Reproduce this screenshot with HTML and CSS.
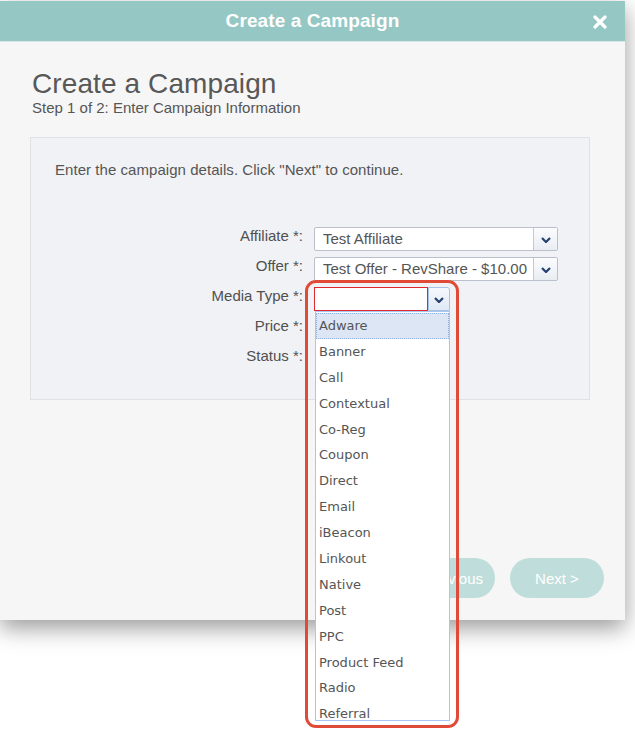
FILE: index.html
```html
<!DOCTYPE html>
<html>
<head>
<meta charset="utf-8">
<link rel="stylesheet" href="styles.css">
</head>
<body>
<div class="modal">
  <div class="modal-header">
    <span class="header-title">Create a Campaign</span>
    <span class="close">
      <svg width="14" height="14" viewBox="0 0 14 14"><path d="M2 2 L12 12 M12 2 L2 12" stroke="#fff" stroke-width="3.2" stroke-linecap="round"/></svg>
    </span>
  </div>
  <div class="modal-body">
    <h1 class="title">Create a Campaign</h1>
    <div class="subtitle">Step 1 of 2: Enter Campaign Information</div>
    <div class="panel">
      <p class="intro">Enter the campaign details. Click "Next" to continue.</p>
      <div class="form">
        <label class="lbl">Affiliate *:</label>
        <div class="select wide"><span class="value">Test Affiliate</span><span class="arrow"><svg width="10" height="6" viewBox="0 0 10 6"><path d="M1 1 L5 5 L9 1" fill="none" stroke="#26416f" stroke-width="2.2"/></svg></span></div>
        <label class="lbl">Offer *:</label>
        <div class="select wide"><span class="value">Test Offer - RevShare - $10.00</span><span class="arrow"><svg width="10" height="6" viewBox="0 0 10 6"><path d="M1 1 L5 5 L9 1" fill="none" stroke="#26416f" stroke-width="2.2"/></svg></span></div>
        <label class="lbl">Media Type *:</label>
        <div class="media">
          <div class="select open"><span class="value invalid"></span><span class="arrow focus"><svg width="10" height="6" viewBox="0 0 10 6"><path d="M1 1 L5 5 L9 1" fill="none" stroke="#26416f" stroke-width="2.2"/></svg></span></div>
          <ul class="options">
            <li class="active">Adware</li>
            <li>Banner</li>
            <li>Call</li>
            <li>Contextual</li>
            <li>Co-Reg</li>
            <li>Coupon</li>
            <li>Direct</li>
            <li>Email</li>
            <li>iBeacon</li>
            <li>Linkout</li>
            <li>Native</li>
            <li>Post</li>
            <li>PPC</li>
            <li>Product Feed</li>
            <li>Radio</li>
            <li>Referral</li>
          </ul>
          <div class="highlight"></div>
        </div>
        <label class="lbl">Price *:</label>
        <div class="placeholder"></div>
        <label class="lbl">Status *:</label>
        <div class="placeholder"></div>
      </div>
    </div>
    <div class="actions">
      <button class="btn prev">&lt; Previous</button>
      <button class="btn next">Next &gt;</button>
    </div>
  </div>
</div>
</body>
</html>
```
FILE: styles.css
```css
* { box-sizing: border-box; }
html, body { margin: 0; padding: 0; background: #fff; }
body {
  font-family: "Liberation Sans", Arial, sans-serif;
  color: #555;
  min-height: 731px;
  overflow: hidden;
}

.modal {
  width: 625px;
  margin-top: 1px;
  background: #f6f6f6;
  box-shadow: 0 8px 22px rgba(0,0,0,0.4);
}
.modal-header {
  height: 41px;
  background: #95c8c4;
  display: flex;
  align-items: center;
  justify-content: center;
  position: relative;
  border-bottom: 1px solid #d7e9e7;
}
.header-title {
  color: #fff;
  font-weight: bold;
  font-size: 19px;
  letter-spacing: 0.1px;
}
.close {
  position: absolute;
  right: 18px;
  top: 14px;
  display: flex;
}
.modal-body {
  height: 578px;
  padding: 26px 21px 0 30px;
  display: flex;
  flex-direction: column;
}
.title {
  margin: 0;
  padding-left: 2px;
  font-weight: normal;
  font-size: 28px;
  line-height: 32px;
  color: #585858;
  letter-spacing: 0.1px;
}
.subtitle {
  padding-left: 2px;
  font-size: 15px;
  line-height: 16px;
  color: #555;
}
.panel {
  margin-top: 21px;
  margin-right: 14px;
  background: #f1f2f6;
  border: 1px solid #e0e1e5;
  padding: 24px 24px 28px 24px;
}
.intro {
  margin: 0;
  font-size: 15px;
  line-height: 16px;
  color: #555;
  letter-spacing: 0.05px;
}
.form {
  margin-top: 49px;
  display: grid;
  grid-template-columns: 248px 244px;
  column-gap: 11px;
  row-gap: 6px;
}
.lbl {
  text-align: right;
  font-size: 15px;
  line-height: 17px;
  color: #505050;
}
.select {
  height: 24px;
  background: #fff;
  border: 1px solid #b9c0cb;
  border-radius: 2px;
  display: flex;
  font-size: 15px;
  color: #555;
}
.select .value {
  flex: 1;
  padding-left: 8px;
  line-height: 22px;
  white-space: nowrap;
  overflow: hidden;
}
.arrow {
  width: 24px;
  border-left: 1px solid #c3c8d1;
  background: linear-gradient(#fbfcfd, #e9edf3);
  display: flex;
  align-items: center;
  justify-content: center;
  padding-top: 1px;
}
.media {
  position: relative;
  width: 136px;
}
.select.open {
  border: none;
  background: transparent;
}
.value.invalid {
  background: #fff;
  border: 1px solid #e02830;
}
.arrow.focus {
  width: 22px;
  border: 1px solid #a8c3e6;
  border-radius: 0 3px 0 0;
  background: linear-gradient(#f6f9fd, #dfe8f4);
}
.options {
  position: absolute;
  top: 24px;
  left: 1px;
  width: 135px;
  height: 410px;
  margin: 0;
  padding: 0;
  list-style: none;
  background: #fff;
  border: 1px solid #a9c7ee;
  overflow: hidden;
  z-index: 2;
  font-family: "DejaVu Sans", Verdana, sans-serif;
  font-size: 13px;
  color: #555;
}
.options li {
  height: 25.9px;
  line-height: 25.9px;
  padding-left: 3px;
  white-space: nowrap;
}
.options li:first-child { margin-top: 1px; }
.options li.active {
  background: #dce6f5;
  outline: 1px dotted #8fb0e0;
  outline-offset: -1px;
}
.highlight {
  position: absolute;
  top: -7px;
  left: -9px;
  width: 154px;
  height: 448px;
  border: 3.5px solid #e04b37;
  border-radius: 11px;
  z-index: 3;
  pointer-events: none;
}
.placeholder { height: 24px; }
.actions {
  margin-top: 158px;
  display: flex;
  justify-content: flex-end;
  gap: 15px;
}
.btn {
  height: 40px;
  border: none;
  border-radius: 20px;
  background: #bfdedb;
  color: #fff;
  font-family: "Liberation Sans", Arial, sans-serif;
  font-size: 15px;
  padding: 0 25px;
}
.btn.prev { padding: 0 12px 0 25px; }
.btn.next { width: 94px; padding: 0; }
```
